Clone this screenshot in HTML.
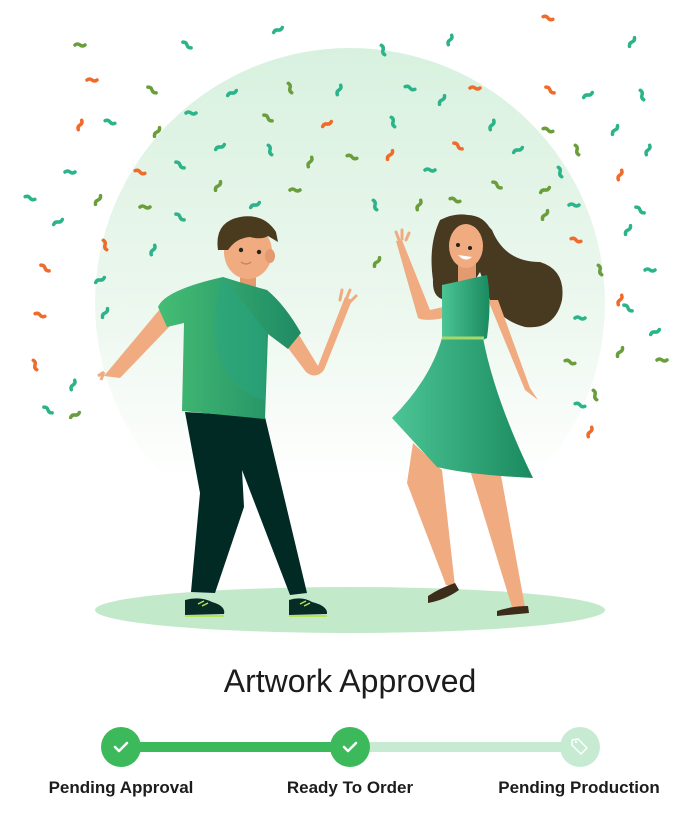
<!DOCTYPE html>
<html><head><meta charset="utf-8"><style>
html,body{margin:0;padding:0;background:#fff;width:700px;height:816px;overflow:hidden;font-family:"Liberation Sans",sans-serif}
</style></head><body>
<svg width="700" height="816" viewBox="0 0 700 816" xmlns="http://www.w3.org/2000/svg">
<defs>
<linearGradient id="bg" x1="0" y1="0" x2="0" y2="1">
<stop offset="0" stop-color="#d8f1df"/><stop offset="0.55" stop-color="#eef8f0"/><stop offset="0.85" stop-color="#ffffff"/></linearGradient>
<linearGradient id="sh" x1="0" y1="0" x2="1" y2="0"><stop offset="0" stop-color="#45bd74"/><stop offset="1" stop-color="#1e8a64"/></linearGradient>
<linearGradient id="dr" x1="0" y1="0" x2="1" y2="0"><stop offset="0" stop-color="#4cc595"/><stop offset="1" stop-color="#1a8a5f"/></linearGradient>
</defs>
<circle cx="350" cy="303" r="255" fill="url(#bg)"/>
<ellipse cx="350" cy="610" rx="255" ry="23" fill="#c3e9cb"/>
<g id="conf" stroke-linecap="round" stroke-width="3.5" fill="none">
</g>
<!-- man -->
<g>
<path d="M160 309 L170 326 L120 378 L104 376 Z" fill="#f0ac80"/>
<path d="M104 372 l-6 4 m6 -4 l-3 8" stroke="#f0ac80" stroke-width="3"/>
<path d="M296 330 L318 366 L345 297 L352 300 L324 370 Q316 380 306 372 L288 348 Z" fill="#f0ac80"/>
<path d="M340 300 l2 -10 m4 10 l4 -10 m0 12 l6 -6" stroke="#f0ac80" stroke-width="3" stroke-linecap="round"/>
<path d="M185 412 L265 417 L307 593 L290 595 L242 470 L244 507 L215 593 L191 592 L200 493 Z" fill="#012a24"/>
<path d="M185 600 Q200 596 212 602 Q226 606 224 614 L185 615 Z" fill="#062c25"/>
<path d="M289 600 Q302 596 312 602 Q328 606 327 614 L289 615 Z" fill="#062c25"/>
<path d="M185 616 H224 M289 616 H327" stroke="#b9e25a" stroke-width="2"/>
<path d="M198 604 l6 -3 m-2 5 l6 -3 M300 604 l6 -3 m-2 5 l6 -3" stroke="#b9e25a" stroke-width="1.5"/>
<path d="M240 272 L256 272 L256 288 L240 288 Z" fill="#e39a6e"/>
<path d="M158 307 Q165 290 223 277 Q245 284 267 290 Q285 305 301 333 L288 349 L268 334 L265 419 L182 411 L184 323 L167 327 Z" fill="url(#sh)"/>
<path d="M223 277 Q205 330 225 370 Q240 395 265 400 L266 334 L268 334 Z" fill="#2aa583" opacity="0.5"/>
<ellipse cx="248" cy="252" rx="24" ry="27" fill="#f0ac80"/>
<ellipse cx="270" cy="256" rx="5" ry="7" fill="#e39a6e"/>
<path d="M218 250 Q214 222 240 217 Q264 213 276 232 L278 242 L268 236 Q262 240 250 237 Q236 238 228 250 Z" fill="#4a3a1e"/>
<circle cx="241" cy="250" r="2.2" fill="#222"/><circle cx="259" cy="252" r="2.2" fill="#222"/>
<path d="M241 262 Q246 266 251 262" stroke="#c9805a" stroke-width="1.3" fill="none"/>
</g>
<!-- woman -->
<g>
<path d="M440 220 Q470 205 492 230 Q505 262 540 262 Q566 270 562 300 Q555 330 525 327 Q500 320 490 300 L480 272 Q470 290 448 300 Q432 300 433 280 Q428 245 440 220 Z" fill="#483a20"/>
<path d="M442 470 L413 443 L407 483 L446 585 L455 586 Z" fill="#f0ac80"/>
<path d="M470 470 L500 470 L525 607 L512 607 Z" fill="#f0ac80"/>
<path d="M428 596 Q440 588 455 583 L459 590 Q445 600 428 603 Z" fill="#3c2c1a"/>
<path d="M497 611 Q512 606 528 606 L529 613 L497 616 Z" fill="#3c2c1a"/>
<path d="M482 298 L430 310 L402 240 L396 241 L418 318 Q430 325 490 306 Z" fill="#f0ac80"/>
<path d="M399 240 l-3 -8 m6 7 l0 -9 m4 10 l3 -7" stroke="#f0ac80" stroke-width="3" stroke-linecap="round"/>
<path d="M488 300 L525 390 L538 400 L530 388 L498 300 Z" fill="#f0ac80"/>
<path d="M458 260 L476 260 L476 283 L458 283 Z" fill="#e39a6e"/>
<ellipse cx="466" cy="246" rx="17" ry="22" fill="#f0ac80"/>
<path d="M447 248 Q450 222 468 224 Q482 228 488 246 L492 232 Q484 214 465 215 Q444 218 447 248 Z" fill="#483a20"/>
<circle cx="458" cy="245" r="2" fill="#222"/><circle cx="470" cy="248" r="2" fill="#222"/>
<path d="M458 255 Q465 263 472 257 Z" fill="#fff"/>
<path d="M442 285 Q465 280 487 275 Q492 300 487 338 L483 340 L442 340 Z" fill="url(#dr)"/>
<path d="M442 338 L483 338 Q495 400 533 478 Q470 475 437 467 L392 418 Q430 380 442 338 Z" fill="url(#dr)"/>
<path d="M442 338 H484" stroke="#a6d86a" stroke-width="3"/>
</g>
<text x="350" y="692" text-anchor="middle" font-family="Liberation Sans, sans-serif" font-size="32" fill="#1c1c1c">Artwork Approved</text>
<rect x="121" y="742" width="229" height="10" fill="#3cb95a"/>
<rect x="350" y="742" width="229" height="10" fill="#c6ebd2"/>
<circle cx="121" cy="747" r="20" fill="#3cb95a"/>
<circle cx="350" cy="747" r="20" fill="#3cb95a"/>
<circle cx="580" cy="747" r="20" fill="#c6ebd2"/>
<path d="M115 747 l4 4 l8 -8 M344 747 l4 4 l8 -8" stroke="#fff" stroke-width="2.5" fill="none" stroke-linecap="round" stroke-linejoin="round"/>
<path d="M572 740 l6 -1 l9 9 l-6 6 l-9 -9 Z" stroke="#fff" stroke-width="1.4" fill="none" stroke-linejoin="round"/>
<circle cx="576" cy="742" r="1.2" fill="#fff"/>
<g font-family="Liberation Sans, sans-serif" font-size="17" font-weight="bold" fill="#1c1c1c" text-anchor="middle">
<text x="121" y="793">Pending Approval</text>
<text x="350" y="793">Ready To Order</text>
<text x="579" y="793">Pending Production</text>
</g>
</svg>
<script>
var c=[[80,45,'g'],[187,45,'t'],[278,30,'t'],[383,50,'t'],[450,40,'t'],[548,18,'o'],[632,42,'t'],[92,80,'o'],[152,90,'g'],[232,93,'t'],[290,88,'g'],[339,90,'t'],[410,88,'t'],[442,100,'t'],[475,88,'o'],[550,90,'o'],[588,95,'t'],[642,95,'t'],[80,125,'o'],[110,122,'t'],[157,132,'g'],[191,113,'t'],[268,118,'g'],[327,124,'o'],[393,122,'t'],[492,125,'t'],[548,130,'g'],[615,130,'t'],[70,172,'t'],[180,165,'t'],[220,147,'t'],[270,150,'t'],[310,162,'g'],[352,157,'g'],[390,155,'o'],[430,170,'t'],[458,146,'o'],[518,150,'t'],[577,150,'g'],[648,150,'t'],[140,172,'o'],[218,186,'g'],[295,190,'g'],[497,185,'g'],[545,190,'g'],[560,172,'t'],[620,175,'o'],[30,198,'t'],[98,200,'g'],[145,207,'g'],[180,217,'t'],[255,205,'t'],[375,205,'t'],[419,205,'g'],[455,200,'g'],[545,215,'g'],[574,205,'t'],[640,210,'t'],[58,222,'t'],[105,245,'o'],[153,250,'t'],[576,240,'o'],[628,230,'t'],[650,270,'t'],[45,268,'o'],[100,280,'t'],[600,270,'g'],[620,300,'o'],[40,315,'o'],[105,313,'t'],[580,318,'t'],[628,308,'t'],[655,332,'t'],[35,365,'o'],[73,385,'t'],[570,362,'g'],[620,352,'g'],[662,360,'g'],[48,410,'t'],[75,415,'g'],[595,395,'g'],[590,432,'o'],[580,405,'t'],[377,262,'g']];
var col={g:'#6a9e3a',t:'#2bb38a',o:'#f06a2a'};var g=document.getElementById('conf');var s='';
c.forEach(function(p,i){var a=[0,35,-30,70,110,15,-60][i%7];s+='<path transform="translate('+p[0]+' '+p[1]+') rotate('+a+')" d="M-5 0 q2.5 -2 5 0 t5 0" stroke="'+col[p[2]]+'"/>';});
g.innerHTML=s;
</script>
</body></html>
